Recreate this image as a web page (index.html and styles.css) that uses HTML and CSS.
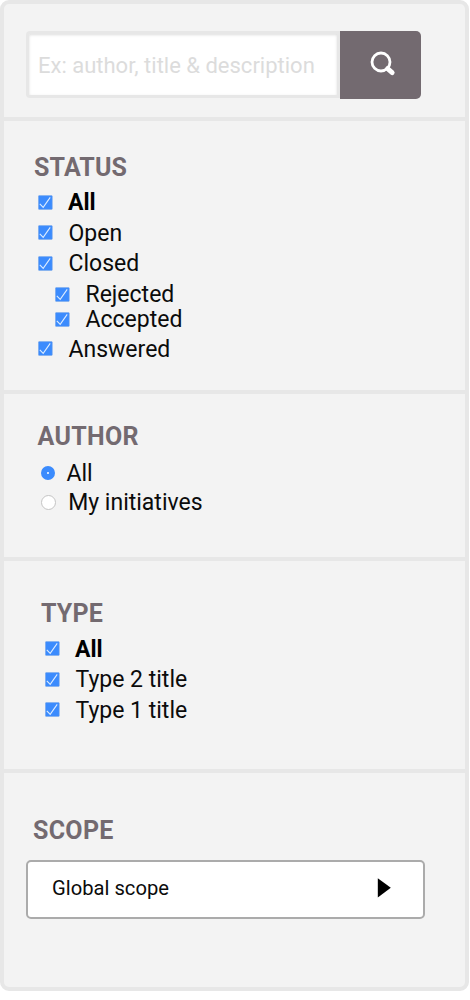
FILE: index.html
```html
<!DOCTYPE html>
<html lang="en">
<head>
<meta charset="utf-8">
<title>Initiative filters</title>
<link rel="stylesheet" href="styles.css">
</head>
<body>
<svg class="defs" width="0" height="0" aria-hidden="true">
  <symbol id="check" viewBox="0 0 15 15">
    <rect x=".4" y=".6" width="13.9" height="13.9" rx=".8" fill="#3b8bfd" stroke="#7da9e6" stroke-width=".5"/>
    <path d="M1.8 8.8 5.2 12.4 12.2 2.4" fill="none" stroke="#dcecff" stroke-width="1.1"/>
  </symbol>
</svg>
<form class="filters">
  <section class="section search">
    <div class="field"><span class="placeholder">Ex: author, title &amp; description</span></div>
    <div class="button">
      <svg width="26" height="26" viewBox="0 0 26 26">
        <circle cx="11" cy="11" r="9" fill="none" stroke="#fff" stroke-width="2.8"/>
        <path d="M17.6 17.6 22.2 21.6" stroke="#fff" stroke-width="4.8" stroke-linecap="round"/>
      </svg>
    </div>
  </section>

  <section class="section status">
    <h2 class="heading heading-status">STATUS</h2>
    <div class="row"><svg class="box"><use href="#check"/></svg><b class="label all">All</b></div>
    <div class="row"><svg class="box"><use href="#check"/></svg><span class="label">Open</span></div>
    <div class="row"><svg class="box"><use href="#check"/></svg><span class="label">Closed</span></div>
    <div class="children">
      <div class="row row-child"><svg class="box"><use href="#check"/></svg><span class="label">Rejected</span></div>
      <div class="row row-child"><svg class="box"><use href="#check"/></svg><span class="label label-tight">Accepted</span></div>
    </div>
    <div class="row"><svg class="box"><use href="#check"/></svg><span class="label">Answered</span></div>
  </section>

  <section class="section author">
    <h2 class="heading heading-author">AUTHOR</h2>
    <div class="row row-radio"><span class="radio radio-on"></span><span class="label">All</span></div>
    <div class="row row-radio"><span class="radio"></span><span class="label mine">My initiatives</span></div>
  </section>

  <section class="section type">
    <h2 class="heading heading-type">TYPE</h2>
    <div class="row"><svg class="box"><use href="#check"/></svg><b class="label all">All</b></div>
    <div class="row"><svg class="box"><use href="#check"/></svg><span class="label">Type 2 title</span></div>
    <div class="row"><svg class="box"><use href="#check"/></svg><span class="label">Type 1 title</span></div>
  </section>

  <section class="section scope">
    <h2 class="heading heading-scope">SCOPE</h2>
    <div class="select">
      <span>Global scope</span>
      <svg width="14" height="20" viewBox="0 0 14 20"><path d="M.8.3 13.8 9.8.8 19.5Z"/></svg>
    </div>
  </section>
</form>
</body>
</html>
```
FILE: styles.css
```css
* { box-sizing: border-box; }
body {
  margin: 0;
  background: #fff;
  color: #0b0b0b;
  font-family: Roboto, "Liberation Sans", sans-serif;
  font-size: 23px;
}
svg { display: block; flex: none; }
.defs { position: absolute; }

.filters {
  width: 469px;
  height: 991px;
  border: 4px solid #e7e7e7;
  border-radius: 9px;
  background: #f3f3f3;
}
.section { border-bottom: 4px solid #e7e7e7; }
.section:last-child { border-bottom: 0; }

.search { display: flex; height: 117px; padding: 27px 0 0 22px; }
.field {
  display: flex;
  align-items: center;
  width: 314px;
  height: 67px;
  padding: 2px 0 0 9px;
  border: 3px solid #e7e7e7;
  border-radius: 4px 0 0 4px;
  background: #fff;
  box-shadow: inset 0 1px 3px #dedede;
}
.placeholder { color: #dcdcdc; font-size: 22px; white-space: nowrap; }
.button {
  display: flex;
  width: 81px;
  height: 67.5px;
  padding: 20px 0 0 30px;
  border-radius: 0 5px 5px 0;
  background: #736a70;
}

.heading {
  margin: 0;
  color: #736a70;
  font-size: 25px;
  font-weight: 700;
  line-height: 30px;
  letter-spacing: .15px;
}
.row { display: flex; align-items: center; gap: 15.5px; height: 30.5px; }
.box { width: 15px; height: 15px; }
.label { padding-top: 2px; line-height: 30px; white-space: nowrap; }
.label-tight { padding-top: 0; }
.all { margin-left: -.5px; color: #000; }

.status { height: 273px; padding: 31.5px 0 0 34px; }
.heading-status { margin: 0 0 4.5px -4px; }
.children { padding: 3px 0 1px 17px; }
.row-child { height: 25.5px; }

.author { height: 167px; padding: 28px 0 0 36.5px; }
.heading-author { margin: 0 0 6.5px -3px; letter-spacing: .3px; }
.row-radio { height: 29px; gap: 12px; }
.mine { margin-left: .7px; }
.radio {
  width: 15px;
  height: 15px;
  border: 1px solid #c4c4c4;
  border-radius: 50%;
  background: #fff;
}
.radio-on { width: 14px; height: 14px; border: 6px solid #3b8bfd; }

.type { height: 212px; padding: 38px 0 0 41px; }
.heading-type { margin: 0 0 4.5px -4px; }

.scope { height: 214px; padding: 43px 0 0 22px; }
.heading-scope { margin: 0 0 14px 7px; letter-spacing: .3px; }
.select {
  display: flex;
  align-items: center;
  justify-content: space-between;
  width: 399px;
  height: 58.5px;
  padding: 0 32px 3px 24px;
  border: 2px solid #ababab;
  border-radius: 5px;
  background: #fff;
  font-size: 20.2px;
}
```
